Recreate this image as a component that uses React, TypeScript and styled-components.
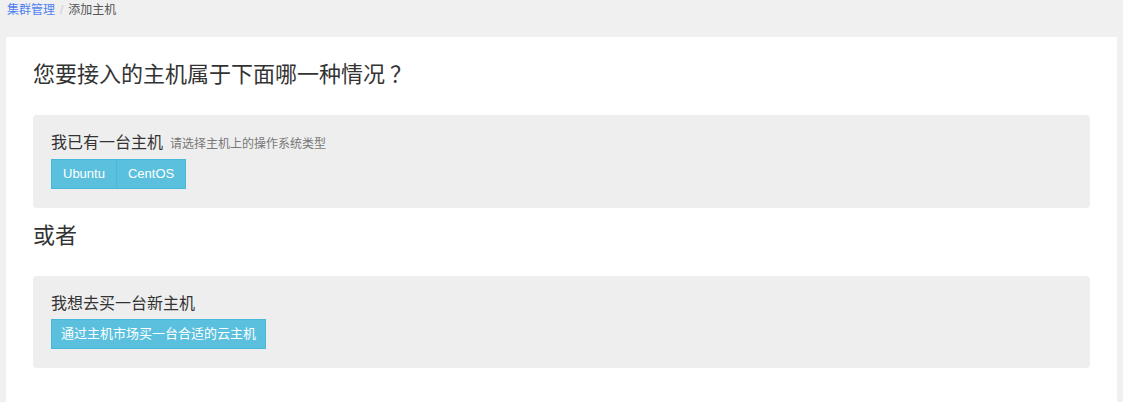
import React from "react";
import styled, { createGlobalStyle } from "styled-components";

const Global = createGlobalStyle`
  html, body { margin: 0; padding: 0; }
  body {
    background: #f0f0f0;
    font-family: "Liberation Sans", "Noto Sans CJK SC", Arial, sans-serif;
    color: #333;
  }
`;

const Page = styled.div`
  padding: 0 6px;
  min-height: 100vh;
  box-sizing: border-box;
  display: flex;
  flex-direction: column;
`;

const Breadcrumb = styled.nav`
  height: 37px;
  box-sizing: border-box;
  padding: 2px 1px 0;
  font-size: 12px;
  line-height: 17px;
  display: flex;
  align-items: flex-start;
  gap: 5px;
`;

const Crumb = styled.a`
  color: #4f7ff2;
  text-decoration: none;
`;

const Sep = styled.span`
  color: #ccc;
`;

const Current = styled.span`
  color: #555;
`;

const Panel = styled.main`
  flex: 1;
  background: #fff;
  padding: 26px 27px 30px;
`;

const Heading = styled.h3`
  margin: 0;
  font-size: 22px;
  font-weight: normal;
  line-height: 24px;
  color: #333;
`;

const FullWidthMark = styled.span`
  margin-left: 5px;
`;

const Well = styled.section`
  background: #eee;
  border-radius: 4px;
  padding: 18px 18px 19px;
  margin: 28px 0 16px;
`;

const WellTitle = styled.div`
  font-size: 16px;
  line-height: 20px;
  color: #333;
  margin-bottom: 5px;
`;

const Hint = styled.small`
  font-size: 12px;
  color: #777;
  margin-left: 7px;
`;

const BtnGroup = styled.div`
  display: inline-flex;
`;

const Btn = styled.button<{ $px?: number }>`
  font-family: "Liberation Sans", "Noto Sans CJK SC", Arial, sans-serif;
  font-size: 13px;
  line-height: 16px;
  padding: 6px ${(p) => p.$px ?? 11}px;
  color: #fff;
  background: #5bc0de;
  border: 1px solid #46b8da;
  border-radius: 0;
  cursor: pointer;
  & + & {
    margin-left: -1px;
  }
`;

export default function App() {
  return (
    <>
      <Global />
      <Page>
        <Breadcrumb>
          <Crumb href="#">集群管理</Crumb>
          <Sep>/</Sep>
          <Current>添加主机</Current>
        </Breadcrumb>
        <Panel>
          <Heading>
            您要接入的主机属于下面哪一种情况<FullWidthMark>？</FullWidthMark>
          </Heading>
          <Well>
            <WellTitle>
              我已有一台主机<Hint>请选择主机上的操作系统类型</Hint>
            </WellTitle>
            <BtnGroup>
              <Btn>Ubuntu</Btn>
              <Btn>CentOS</Btn>
            </BtnGroup>
          </Well>
          <Heading>或者</Heading>
          <Well>
            <WellTitle>我想去买一台新主机</WellTitle>
            <Btn $px={9}>通过主机市场买一台合适的云主机</Btn>
          </Well>
        </Panel>
      </Page>
    </>
  );
}
